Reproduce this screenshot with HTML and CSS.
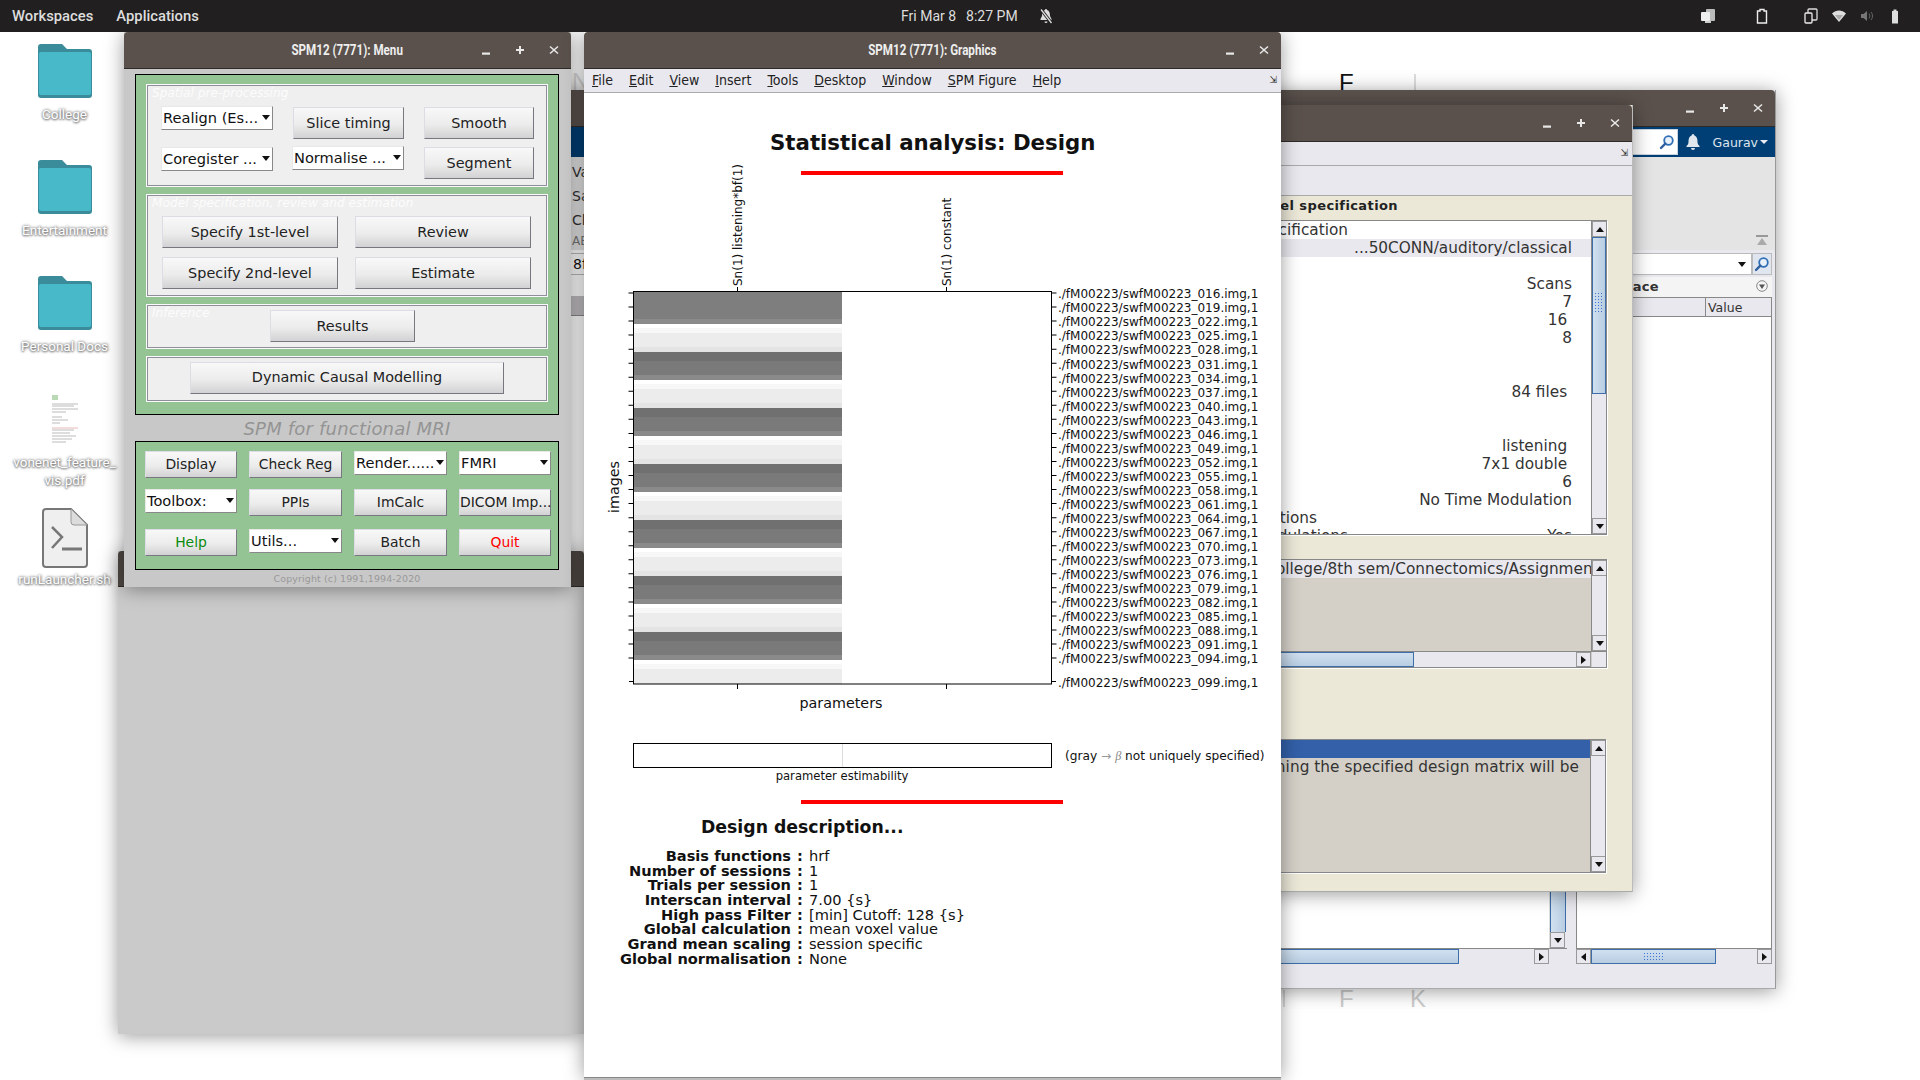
FILE: index.html
```html
<!DOCTYPE html>
<html lang="en">

<head>
    <meta charset="UTF-8">
    <title>SPM12 desktop</title>
    <link rel="stylesheet" href="styles.css">
</head>

<body>
    <svg class="defs" aria-hidden="true">
        <symbol id="i-min" viewBox="0 0 10 10"><rect x="1" y="7.5" width="8" height="2.2" fill="currentColor"/></symbol>
        <symbol id="i-max" viewBox="0 0 10 10"><path d="M4 1h2v3h3v2H6v3H4V6H1V4h3z" fill="currentColor"/></symbol>
        <symbol id="i-close" viewBox="0 0 10 10"><path d="M1.5 1l3.5 3.000L8.500 1 9.500 2 6 5l3.500 3-1 1L5 6 1.500 9l-1-1L4 5 .5 2z" fill="currentColor"/></symbol>
        <symbol id="i-folder" viewBox="0 0 54 54">
            <path d="M3 0h21l5 5h22a3 3 0 0 1 3 3v43a3 3 0 0 1-3 3H3a3 3 0 0 1-3-3V3a3 3 0 0 1 3-3z" fill="#3a8c9a"/>
            <path d="M3 8h48a2 2 0 0 1 2 2v39a2 2 0 0 1-2 2H3a2 2 0 0 1-2-2V10a2 2 0 0 1 2-2z" fill="#48b9c9"/>
        </symbol>
        <symbol id="i-glass" viewBox="0 0 16 16">
            <circle cx="9.500" cy="6.500" r="4.300" fill="#e8f0fa" stroke="#2f6fb5" stroke-width="1.800"/>
            <path d="M6.300 9.700L2 14" stroke="#2f5f9f" stroke-width="2.400" stroke-linecap="round"/>
        </symbol>
    </svg>

    <div class="desktop">
        <!-- page underneath the windows -->
        <span class="bg-mark bg-n">N</span>
        <span class="bg-mark bg-e">F</span>
        <span class="bg-mark bg-bar"></span>
        <span class="bg-mark bg-f">F</span>
        <span class="bg-mark bg-k">K</span>
        <span class="bg-mark bg-bar2"></span>

        <div class="icons">
            <div class="dicon">
                <svg class="folder"><use href="#i-folder"/></svg>
                <div class="dlabel">College</div>
            </div>
            <div class="dicon">
                <svg class="folder"><use href="#i-folder"/></svg>
                <div class="dlabel">Entertainment</div>
            </div>
            <div class="dicon">
                <svg class="folder"><use href="#i-folder"/></svg>
                <div class="dlabel">Personal Docs</div>
            </div>
            <div class="dicon">
                <svg class="pdf" viewBox="0 0 38 54">
                    <rect width="38" height="54" fill="#fff"/>
                    <rect x="6" y="3" width="6" height="5" fill="#b9d8b4"/>
                    <path d="M6 12h26M6 14h22M6 17h26M6 20h14M6 25h10M6 28h16M6 31h8M6 38h22M6 41h18M6 44h24M6 47h20M6 50h14" stroke="#bbb" stroke-width="1"/>
                    <path d="M6 36h26" stroke="#e6b8b8" stroke-width="1"/>
                </svg>
                <div class="dlabel">vonenet_feature_<br>vis.pdf</div>
            </div>
            <div class="dicon">
                <svg class="script" viewBox="0 0 46 60">
                    <path d="M4 1h25l16 16v39a3 3 0 0 1-3 3H4a3 3 0 0 1-3-3V4a3 3 0 0 1 3-3z" fill="#efefef" stroke="#777" stroke-width="2"/>
                    <path d="M29 1v13a3 3 0 0 0 3 3h13z" fill="#dcdcdc" stroke="#999" stroke-width="1"/>
                    <path d="M10 19l10 10-10 11" fill="none" stroke="#777" stroke-width="2.500"/>
                    <path d="M20 41h20" stroke="#777" stroke-width="3"/>
                </svg>
                <div class="dlabel">runLauncher.sh</div>
            </div>
        </div>

        <!-- gray figure behind the menu -->
        <div class="window win-blank">
            <div class="blank-bar"></div>
        </div>

        <!-- matlab main window -->
        <div class="window win-matlab">
            <div class="titlebar">
                <span></span>
                <span></span>
                <div class="controls">
                    <svg><use href="#i-min"/></svg>
                    <svg><use href="#i-max"/></svg>
                    <svg><use href="#i-close"/></svg>
                </div>
            </div>
            <div class="ml-blue">
                <div class="ml-search"><svg class="glass"><use href="#i-glass"/></svg></div>
                <svg class="ml-bell" viewBox="0 0 14 16">
                    <path d="M7 0a1.500 1.500 0 0 1 1.400 1.500C11 2.300 11.500 5 11.500 8c0 2 1 3 2 4v1H.5v-1c1-1 2-2 2-4 0-3 .5-5.700 3.100-6.500A1.500 1.500 0 0 1 7 0zM5 14h4a2 2 0 0 1-4 0z" fill="#dfe6ee"/>
                </svg>
                <span class="ml-user">Gaurav</span>
                <span class="caret-white"></span>
            </div>
            <div class="ml-tools">
                <div class="strip-labels">
                    <div>Va</div>
                    <div>Sa</div>
                    <div>Cl</div>
                    <div class="strip-ab">AB</div>
                </div>
                <svg class="collapse" viewBox="0 0 12 12">
                    <rect y="0" width="12" height="2" fill="#999"/>
                    <path d="M6 3l5 7H1z" fill="#aaa"/>
                </svg>
            </div>
            <div class="ml-panels">
                <div class="left-panel">
                    <div class="left-top">
                        <div class="left-content">
                            <div class="strip-row">8f</div>
                            <div class="strip-gap"></div>
                            <div class="strip-dark"></div>
                        </div>
                        <div class="sb-v sb-v-long">
                            <div class="sb-track"><div class="sb-thumb-v tall"></div></div>
                            <div class="sb-btn down"></div>
                        </div>
                    </div>
                    <div class="sb-h left-sb">
                        <div class="sb-thumb-h fill"></div>
                        <div class="sb-rest"></div>
                        <div class="sb-btn right"></div>
                        <div class="sb-corner"></div>
                    </div>
                </div>
                <div class="right-panel">
                    <div class="combo-row">
                        <div class="combo"><span class="tri"></span></div>
                        <div class="combo-btn"><svg class="glass"><use href="#i-glass"/></svg></div>
                    </div>
                    <div class="ws-head">
                        <span>Workspace</span>
                        <svg class="ws-menu" viewBox="0 0 12 12">
                            <circle cx="6" cy="6" r="5.300" fill="none" stroke="#888"/>
                            <path d="M3 4.500h6L6 9z" fill="#555"/>
                        </svg>
                    </div>
                    <div class="ws-cols">
                        <div class="ws-name">Name</div>
                        <div class="ws-value">Value</div>
                    </div>
                    <div class="ws-body"></div>
                    <div class="sb-h">
                        <div class="sb-btn left"></div>
                        <div class="sb-thumb-h mid"><span class="grip grip-h"></span></div>
                        <div class="sb-rest"></div>
                        <div class="sb-btn right"></div>
                    </div>
                </div>
            </div>
            <div class="ml-status"></div>
        </div>

        <!-- batch editor -->
        <div class="window win-batch">
            <div class="titlebar">
                <span></span>
                <span></span>
                <div class="controls">
                    <svg><use href="#i-min"/></svg>
                    <svg><use href="#i-max"/></svg>
                    <svg><use href="#i-close"/></svg>
                </div>
            </div>
            <div class="menubar batch-menu"><span class="dock-arrow">&#8690;</span></div>
            <div class="batch-tools"></div>
            <div class="batch-body">
                <div class="module-title">Current Module: fMRI model specification</div>

                <div class="list list-module">
                    <div class="list-rows">
                        <div class="row"><span class="row-left">fMRI model specification</span></div>
                        <div class="row row-sel"><span class="row-right">...50CONN/auditory/classical</span></div>
                        <div class="row"></div>
                        <div class="row"><span class="row-right">Scans</span></div>
                        <div class="row"><span class="row-right">7</span></div>
                        <div class="row"><span class="row-right">16 </span></div>
                        <div class="row"><span class="row-right">8</span></div>
                        <div class="row"></div>
                        <div class="row"></div>
                        <div class="row"><span class="row-right">84 files </span></div>
                        <div class="row"></div>
                        <div class="row"></div>
                        <div class="row"><span class="row-right">listening </span></div>
                        <div class="row"><span class="row-right">7x1 double </span></div>
                        <div class="row"><span class="row-right">6</span></div>
                        <div class="row"><span class="row-right">No Time Modulation</span></div>
                        <div class="row"><span class="row-left row-left-short">Multiple conditions</span></div>
                        <div class="row"><span class="row-left">Orthogonalise modulations</span><span class="row-right">Yes</span></div>
                    </div>
                    <div class="sb-v">
                        <div class="sb-btn up"></div>
                        <div class="sb-track">
                            <div class="sb-thumb-v module-thumb"><span class="grip grip-v"></span></div>
                        </div>
                        <div class="sb-btn down"></div>
                    </div>
                </div>

                <div class="list list-path">
                    <div class="list-main">
                        <div class="list-rows gray">
                            <div class="row row-sel row-path">/home/gaurav/College/8th sem/Connectomics/Assignment1</div>
                        </div>
                        <div class="sb-v">
                            <div class="sb-btn up"></div>
                            <div class="sb-track"></div>
                            <div class="sb-btn down"></div>
                        </div>
                    </div>
                    <div class="sb-h">
                        <div class="sb-thumb-h path-thumb"></div>
                        <div class="sb-rest"></div>
                        <div class="sb-btn right"></div>
                        <div class="sb-corner corner-path"></div>
                    </div>
                </div>

                <div class="list list-help">
                    <div class="list-rows gray">
                        <div class="row row-blue"></div>
                        <div class="row row-help">Directory containing the specified design matrix will be</div>
                    </div>
                    <div class="sb-v">
                        <div class="sb-btn up"></div>
                        <div class="sb-track"></div>
                        <div class="sb-btn down"></div>
                    </div>
                </div>
            </div>
        </div>

        <!-- spm menu -->
        <div class="window win-menu">
            <div class="titlebar">
                <span></span>
                <span class="win-name">SPM12 (7771): Menu</span>
                <div class="controls">
                    <svg><use href="#i-min"/></svg>
                    <svg><use href="#i-max"/></svg>
                    <svg><use href="#i-close"/></svg>
                </div>
            </div>
            <div class="menu-body">
                <div class="frame frame-top">
                    <div class="panel">
                        <div class="panel-title">Spatial pre-processing</div>
                        <div class="grid-spatial">
                            <div class="popup"><span>Realign (Es...</span></div>
                            <button class="btn btn-low">Slice timing</button>
                            <button class="btn btn-low">Smooth</button>
                            <div class="popup"><span>Coregister ...</span></div>
                            <div class="popup popup-up"><span>Normalise ...</span></div>
                            <button class="btn">Segment</button>
                        </div>
                    </div>
                    <div class="panel">
                        <div class="panel-title">Model specification, review and estimation</div>
                        <div class="grid-model">
                            <button class="btn">Specify 1st-level</button>
                            <button class="btn">Review</button>
                            <button class="btn">Specify 2nd-level</button>
                            <button class="btn">Estimate</button>
                        </div>
                    </div>
                    <div class="panel panel-infer">
                        <div class="panel-title">Inference</div>
                        <button class="btn btn-results">Results</button>
                    </div>
                    <div class="panel panel-dcm">
                        <button class="btn btn-dcm">Dynamic Causal Modelling</button>
                    </div>
                </div>

                <div class="spm-for">SPM for functional MRI</div>

                <div class="frame frame-tools">
                    <button class="btn tool">Display</button>
                    <button class="btn tool">Check Reg</button>
                    <div class="popup"><span>Render......</span></div>
                    <div class="popup"><span>FMRI</span></div>
                    <div class="popup"><span>Toolbox:</span></div>
                    <button class="btn tool">PPIs</button>
                    <button class="btn tool">ImCalc</button>
                    <button class="btn tool">DICOM Imp...</button>
                    <button class="btn tool help">Help</button>
                    <div class="popup"><span>Utils...</span></div>
                    <button class="btn tool">Batch</button>
                    <button class="btn tool quit">Quit</button>
                </div>

                <div class="copyright">Copyright (c) 1991,1994-2020</div>
            </div>
        </div>

        <!-- spm graphics -->
        <div class="window win-graphics">
            <div class="titlebar">
                <span></span>
                <span class="win-name">SPM12 (7771): Graphics</span>
                <div class="controls">
                    <svg><use href="#i-min"/></svg>
                    <svg><use href="#i-close"/></svg>
                </div>
            </div>
            <div class="menubar">
                <span><u>F</u>ile</span>
                <span><u>E</u>dit</span>
                <span><u>V</u>iew</span>
                <span><u>I</u>nsert</span>
                <span><u>T</u>ools</span>
                <span><u>D</u>esktop</span>
                <span><u>W</u>indow</span>
                <span><u>S</u>PM Figure</span>
                <span><u>H</u>elp</span>
                <span class="dock-arrow">&#8690;</span>
            </div>
            <div class="figure">
                <h1 class="fig-title">Statistical analysis: Design</h1>
                <div class="red-rule"></div>

                <svg class="plot" viewBox="584 175 697 625">
                    <defs>
                        <pattern id="stripes" x="0" y="324" width="10" height="56" patternUnits="userSpaceOnUse">
                            <rect width="10" height="4" y="0" fill="#ffffff"/>
                            <rect width="10" height="5" y="4" fill="#f7f7f7"/>
                            <rect width="10" height="14" y="9" fill="#ececec"/>
                            <rect width="10" height="5" y="23" fill="#e4e4e4"/>
                            <rect width="10" height="9" y="28" fill="#707070"/>
                            <rect width="10" height="14" y="37" fill="#7a7a7a"/>
                            <rect width="10" height="5" y="51" fill="#8a8a8a"/>
                        </pattern>
                    </defs>

                    <rect x="634" y="292" width="208" height="27" fill="#7e7e7e"/>
                    <rect x="634" y="319" width="208" height="5" fill="#8a8a8a"/>
                    <rect x="634" y="324" width="208" height="360" fill="url(#stripes)"/>

                    <g class="axes">
                        <rect x="633.500" y="291.500" width="418" height="392.500"/>
                        <line class="ticks" x1="631" x2="631" y1="292.500" y2="660"/>
                        <line class="ticks" x1="1054" x2="1054" y1="292.500" y2="660"/>
                        <path d="M629 681.500h4M1052 681.500h4M737.500 287v4M946.500 287v4M737.500 684v5M946.500 684v5"/>
                        <rect x="633.500" y="743.500" width="418" height="24"/>
                        <path class="mid-tick" d="M842.500 744v23"/>
                    </g>

                    <text class="lbl-rot" transform="translate(742,286) rotate(-90)">Sn(1) listening*bf(1)</text>
                    <text class="lbl-rot" transform="translate(951,286) rotate(-90)">Sn(1) constant</text>
                    <text class="lbl-axis" transform="translate(619,487) rotate(-90)" text-anchor="middle">images</text>
                    <text class="lbl-axis" x="841" y="708" text-anchor="middle">parameters</text>
                    <text class="lbl-small" x="842" y="780" text-anchor="middle">parameter estimability</text>
                    <text class="lbl-note" x="1065" y="760">(gray <tspan class="lbl-dim">&#8594;</tspan> <tspan class="lbl-beta">&#946;</tspan> not uniquely specified)</text>

                    <g class="scan-labels">
                        <text x="1058" y="298.300">./fM00223/swfM00223_016.img,1</text>
                        <text x="1058" y="312.300">./fM00223/swfM00223_019.img,1</text>
                        <text x="1058" y="326.400">./fM00223/swfM00223_022.img,1</text>
                        <text x="1058" y="340.400">./fM00223/swfM00223_025.img,1</text>
                        <text x="1058" y="354.400">./fM00223/swfM00223_028.img,1</text>
                        <text x="1058" y="368.500">./fM00223/swfM00223_031.img,1</text>
                        <text x="1058" y="382.500">./fM00223/swfM00223_034.img,1</text>
                        <text x="1058" y="396.500">./fM00223/swfM00223_037.img,1</text>
                        <text x="1058" y="410.600">./fM00223/swfM00223_040.img,1</text>
                        <text x="1058" y="424.600">./fM00223/swfM00223_043.img,1</text>
                        <text x="1058" y="438.600">./fM00223/swfM00223_046.img,1</text>
                        <text x="1058" y="452.600">./fM00223/swfM00223_049.img,1</text>
                        <text x="1058" y="466.700">./fM00223/swfM00223_052.img,1</text>
                        <text x="1058" y="480.700">./fM00223/swfM00223_055.img,1</text>
                        <text x="1058" y="494.700">./fM00223/swfM00223_058.img,1</text>
                        <text x="1058" y="508.800">./fM00223/swfM00223_061.img,1</text>
                        <text x="1058" y="522.800">./fM00223/swfM00223_064.img,1</text>
                        <text x="1058" y="536.800">./fM00223/swfM00223_067.img,1</text>
                        <text x="1058" y="550.800">./fM00223/swfM00223_070.img,1</text>
                        <text x="1058" y="564.900">./fM00223/swfM00223_073.img,1</text>
                        <text x="1058" y="578.900">./fM00223/swfM00223_076.img,1</text>
                        <text x="1058" y="592.900">./fM00223/swfM00223_079.img,1</text>
                        <text x="1058" y="607">./fM00223/swfM00223_082.img,1</text>
                        <text x="1058" y="621">./fM00223/swfM00223_085.img,1</text>
                        <text x="1058" y="635">./fM00223/swfM00223_088.img,1</text>
                        <text x="1058" y="649.100">./fM00223/swfM00223_091.img,1</text>
                        <text x="1058" y="663.100">./fM00223/swfM00223_094.img,1</text>
                        <text x="1058" y="686.800">./fM00223/swfM00223_099.img,1</text>
                    </g>
                </svg>

                <div class="red-rule second"></div>
                <h2 class="desc-title">Design description...</h2>
                <div class="desc">
                    <b>Basis functions</b><b>:</b><span>hrf</span>
                    <b>Number of sessions</b><b>:</b><span>1</span>
                    <b>Trials per session</b><b>:</b><span>1</span>
                    <b>Interscan interval</b><b>:</b><span>7.00 {s}</span>
                    <b>High pass Filter</b><b>:</b><span>[min] Cutoff: 128 {s}</span>
                    <b>Global calculation</b><b>:</b><span>mean voxel value</span>
                    <b>Grand mean scaling</b><b>:</b><span>session specific</span>
                    <b>Global normalisation</b><b>:</b><span>None</span>
                </div>
            </div>
        </div>
        <div class="under-bar"></div>

        <header class="topbar">
            <div class="tb-left">
                <span>Workspaces</span>
                <span>Applications</span>
            </div>
            <div class="tb-clock">
                <span>Fri Mar 8</span>
                <span>8:27 PM</span>
                <svg class="tb-mute" viewBox="0 0 16 16">
                    <path d="M8 1c.7 0 1 .5 1 1 2.500.8 3 3 3 6l1.500 3v1h-11v-1L4 8c0-3 .5-5.200 3-6 0-.5.3-1 1-1zM6.500 13.500h3a1.500 1.500 0 0 1-3 0z" fill="#ddd"/>
                    <path d="M3 1.500L13.500 15" stroke="#211f20" stroke-width="3"/>
                    <path d="M3 1.500L13.500 15" stroke="#ddd" stroke-width="1.300"/>
                </svg>
            </div>
            <div class="tb-tray">
                <svg class="tray" viewBox="0 0 16 16">
                    <rect x="6" y="1" width="9" height="12" rx="1" fill="#bbb"/>
                    <rect x="1" y="4" width="9" height="9" rx="1" fill="#eee"/>
                    <rect x="5" y="13" width="6" height="2" fill="#ccc"/>
                </svg>
                <svg class="tray tray-b" viewBox="0 0 16 16">
                    <path d="M6 1.500h4V3h2.500v12h-9V3H6z" fill="none" stroke="#eee" stroke-width="1.400"/>
                </svg>
                <svg class="tray tray-c" viewBox="0 0 16 16">
                    <rect x="5" y="1" width="9" height="11" rx="1" fill="none" stroke="#ddd" stroke-width="1.300"/>
                    <rect x="2" y="5" width="7" height="10" rx="1" fill="#211f20" stroke="#eee" stroke-width="1.300"/>
                </svg>
                <svg class="tray tray-d" viewBox="0 0 16 16">
                    <path d="M1 5.500C5 1.500 11 1.500 15 5.500L8 14z" fill="#ddd"/>
                    <path d="M4 7h8L8 12z" fill="#aaa"/>
                </svg>
                <svg class="tray tray-d" viewBox="0 0 16 16">
                    <path d="M2 6h2.500L8 3v10L4.500 10H2z" fill="#777"/>
                    <path d="M10 5.500a4 4 0 0 1 0 5M12 4a6 6 0 0 1 0 8" fill="none" stroke="#666"/>
                </svg>
                <svg class="tray tray-d" viewBox="0 0 16 16">
                    <path d="M5 3h1.500V1.500h3V3H11v12.500H5z" fill="#ddd"/>
                </svg>
            </div>
        </header>
    </div>
</body>

</html>
```
FILE: styles.css
```css
* {
    box-sizing: border-box;
}

html, body {
    margin: 0;
    padding: 0;
}

body {
    width: 1920px;
    height: 1080px;
    overflow: hidden;
    background-color: #fff;
    font-family: "DejaVu Sans", sans-serif;
    color: #222;
}

.defs {
    display: none;
}

.desktop {
    position: relative;
    width: 1920px;
    height: 1080px;
    overflow: hidden;
    background-color: #fff;
}

/* top bar */
.topbar {
    position: absolute;
    left: 0;
    top: 0;
    z-index: 10;
    width: 1920px;
    height: 32px;
    display: flex;
    align-items: center;
    background-color: #211f20;
    color: #ddd;
    font-family: Roboto, sans-serif;
    font-size: 14.800px;
    font-weight: 500;
}

.tb-left {
    width: 901px;
    padding-left: 12px;
    display: flex;
    gap: 23px;
}

.tb-clock {
    display: flex;
    align-items: center;
    gap: 10px;
    font-size: 14px;
    font-weight: 400;
}

.tb-mute {
    width: 16px;
    height: 16px;
    margin-left: 10px;
}

.tb-tray {
    margin-left: auto;
    padding-right: 17px;
    display: flex;
    align-items: center;
}

.tray {
    width: 16px;
    height: 16px;
}

.tray-b {
    margin-left: 38px;
}

.tray-c {
    margin-left: 33px;
}

.tray-d {
    margin-left: 12px;
}

/* marks of the page under the windows */
.bg-mark {
    position: absolute;
    font-family: "Liberation Sans", sans-serif;
    font-size: 24px;
    line-height: 24px;
}

.bg-n {
    left: 572px;
    top: 70px;
    color: #ddd;
}

.bg-e {
    left: 1339px;
    top: 71px;
    color: #111;
}

.bg-bar {
    left: 1414px;
    top: 74px;
    width: 2px;
    height: 16px;
    background-color: #ddd;
}

.bg-f {
    left: 1339px;
    top: 987px;
    color: #ccc;
}

.bg-k {
    left: 1410px;
    top: 987px;
    color: #ccc;
}

.bg-bar2 {
    left: 1283px;
    top: 990px;
    width: 2px;
    height: 17px;
    background-color: #ddd;
}

/* desktop icons */
.icons {
    position: absolute;
    left: 0;
    top: 44px;
    width: 129px;
    display: flex;
    flex-direction: column;
    align-items: center;
}

.dicon {
    height: 116px;
    display: flex;
    flex-direction: column;
    align-items: center;
}

.folder {
    width: 54px;
    height: 54px;
    margin-bottom: 7px;
}

.pdf {
    width: 38px;
    height: 54px;
    margin-bottom: 7px;
}

.script {
    width: 46px;
    height: 60px;
    margin-bottom: 2px;
}

.dlabel {
    width: 120px;
    text-align: center;
    font-family: Roboto, sans-serif;
    font-size: 13.500px;
    line-height: 18px;
    color: #fff;
    text-shadow: 0 0 3px #777, 0 1px 2px #888, 1px 0 3px #999;
}

/* windows */
.window {
    position: absolute;
    box-shadow: 0 2px 18px rgba(0, 0, 0, 0.4);
    display: flex;
    flex-direction: column;
}

.titlebar {
    height: 37px;
    flex: none;
    display: grid;
    grid-template-columns: 1fr auto 1fr;
    align-items: center;
    background-color: #5a514c;
    border-bottom: 1px solid #2e2a28;
    border-radius: 4px 4px 0 0;
    color: #eee;
}

.win-name {
    font-family: Roboto, sans-serif;
    font-size: 14px;
    font-weight: bold;
    transform: scaleX(0.83);
}

.controls {
    justify-self: end;
    display: flex;
}

.controls svg {
    width: 34px;
    height: 10px;
    color: #e8e8e8;
}

.win-blank {
    left: 118px;
    top: 551px;
    width: 466px;
    height: 483px;
    background-color: #cacaca;
    z-index: 2;
}

.blank-bar {
    height: 36px;
    background-color: #4f4843;
    border-bottom: 1px solid #2e2a28;
    border-radius: 4px 4px 0 0;
}

.win-matlab {
    left: 540px;
    top: 90px;
    width: 1236px;
    height: 899px;
    z-index: 1;
    background-color: #e9e8ee;
    border-right: 1px solid #999;
    border-bottom: 1px solid #aaa;
}

.win-batch {
    left: 1100px;
    top: 105px;
    width: 533px;
    height: 787px;
    z-index: 2;
    background-color: #ebe8d8;
    border-right: 1px solid #bbb;
    border-bottom: 1px solid #aaa;
}

.win-menu {
    left: 124px;
    top: 32px;
    width: 447px;
    height: 555px;
    z-index: 3;
    background-color: #c8c8c8;
}

.win-graphics {
    left: 584px;
    top: 32px;
    width: 697px;
    height: 1045px;
    z-index: 4;
    background-color: #fff;
}

.under-bar {
    position: absolute;
    left: 584px;
    top: 1077px;
    width: 697px;
    height: 3px;
    z-index: 4;
    background-color: #bbb;
    border-top: 1px solid #888;
}

/* spm menu */
.menu-body {
    flex: 1;
    padding: 5px 12px 0 11px;
}

.frame {
    border: 1px solid #000;
    background-color: #94c494;
}

.frame-top {
    height: 341px;
    padding: 9px 10px;
    display: flex;
    flex-direction: column;
    gap: 7px;
}

.panel {
    height: 103px;
    flex: none;
    border: 1px solid #fafafa;
    box-shadow: inset 0 0 0 1px #8f8f9c;
    background-color: #efefef;
}

.panel-title {
    padding: 0 0 0 4px;
    margin-left: 1px;
    height: 16px;
    font-style: italic;
    font-size: 12.200px;
    line-height: 17px;
    color: #fcfcfc;
}

.grid-spatial {
    display: grid;
    grid-template-columns: 112px 111px 110px;
    grid-auto-rows: 41px;
    column-gap: 20px;
    margin: 5px 0 0 14px;
}

.grid-spatial .btn-low {
    margin-top: 1px;
}

.grid-model {
    display: grid;
    grid-template-columns: 176px 176px;
    grid-auto-rows: 41px;
    column-gap: 17px;
    margin: 5px 0 0 15px;
}

.panel-infer {
    height: 45px;
    display: grid;
    grid-template-columns: 123px 145px;
    padding-top: 5px;
}

.panel-infer .panel-title {
    margin-top: -5px;
}

.panel-dcm {
    height: 46px;
    display: flex;
    justify-content: center;
    padding-top: 5px;
}

.btn {
    height: 32px;
    padding: 0;
    border: 1px solid;
    border-color: #dcdce4 #77777f #77777f #dcdce4;
    background: linear-gradient(#f8f8f8, #ececec 55%, #d2d2d4);
    font-family: "DejaVu Sans", sans-serif;
    font-size: 14.400px;
    color: #222;
    white-space: nowrap;
}

.btn-results {
    width: 145px;
}

.btn-dcm {
    width: 314px;
    padding-bottom: 2px;
}

.popup {
    height: 24px;
    display: flex;
    align-items: center;
    justify-content: space-between;
    padding: 0 2px 1px 1px;
    background-color: #fff;
    border: 1px solid;
    border-color: #e8e8e8 #888 #888 #e8e8e8;
    font-size: 14.600px;
    color: #111;
    white-space: nowrap;
}

.popup::after, .tri {
    content: "";
    display: block;
    border-left: 4px solid transparent;
    border-right: 4px solid transparent;
    border-top: 5px solid #111;
}

.popup-up {
    margin: -1px 0 0 -1px;
    width: 112px;
}

.spm-for {
    height: 26px;
    text-align: center;
    font-style: italic;
    font-size: 18px;
    line-height: 28px;
    color: #949494;
    letter-spacing: 0.200px;
}

.frame-tools {
    height: 129px;
    padding: 9px 0 0 9px;
    display: grid;
    grid-template-columns: 92px 93px 93px 92px;
    grid-template-rows: 38px 40px 27px;
    column-gap: 12px;
}

.tool {
    height: 27px;
    padding-bottom: 2px;
    font-size: 13.900px;
}

.help {
    color: #0a8a0a;
}

.quit {
    color: #f00;
}

.copyright {
    text-align: center;
    font-size: 9.500px;
    line-height: 17px;
    color: #999;
    letter-spacing: 0.100px;
}

/* graphics menu */
.menubar {
    height: 24px;
    flex: none;
    display: flex;
    align-items: center;
    gap: 16px;
    padding: 0 0 2px 8px;
    background-color: #e9e8ee;
    border-bottom: 1px solid #aaa;
    font-family: "DejaVu Sans Condensed", "DejaVu Sans", sans-serif;
    font-size: 14px;
    color: #222;
}

.dock-arrow {
    margin-left: auto;
    padding-right: 4px;
    font-size: 10px;
}

.figure {
    flex: 1;
    color: #111;
}

.fig-title {
    margin: 37px 0 0 186px;
    font-size: 21.300px;
    line-height: 26px;
    font-weight: bold;
    color: #111;
}

.red-rule {
    width: 262px;
    height: 4px;
    margin: 15px 0 0 217px;
    background-color: #f00;
}

.red-rule.second {
    margin-top: 0;
}

.plot {
    display: block;
    width: 697px;
    height: 625px;
    overflow: visible;
}

.axes {
    fill: none;
    stroke: #000;
    stroke-width: 1;
}

.ticks {
    stroke-width: 5;
    stroke-dasharray: 1 13.040;
}

.mid-tick {
    stroke: #ddd;
}

.lbl-rot {
    font-size: 12px;
    fill: #111;
}

.lbl-axis {
    font-size: 14.300px;
    fill: #111;
}

.lbl-small {
    font-size: 11.600px;
    fill: #111;
}

.lbl-note {
    font-size: 12.200px;
    fill: #111;
}

.lbl-dim {
    fill: #999;
}

.lbl-beta {
    font-family: "Liberation Serif", serif;
    font-style: italic;
    fill: #888;
}

.scan-labels {
    font-size: 12px;
    fill: #111;
}

.desc-title {
    margin: 12px 0 0 117px;
    font-size: 17.300px;
    line-height: 23px;
    font-weight: bold;
    color: #111;
}

.desc {
    margin-top: 10px;
    display: grid;
    grid-template-columns: 207px 18px auto;
    grid-auto-rows: 14.700px;
    font-size: 14.600px;
    line-height: 14.700px;
    color: #111;
}

.desc b:nth-child(3n+1) {
    text-align: right;
    white-space: nowrap;
}

.desc b:nth-child(3n+2) {
    text-align: center;
}

/* batch editor */
.batch-menu {
    padding-left: 0;
}

.batch-tools {
    height: 30px;
    flex: none;
    background-color: #e9e8ee;
    border-bottom: 1px solid #aaa;
}

.batch-body {
    flex: 1;
    padding-right: 25px;
}

.module-title {
    height: 24px;
    display: flex;
    justify-content: flex-end;
    padding-right: 209px;
    white-space: nowrap;
    overflow: hidden;
    font-size: 13px;
    font-weight: bold;
    letter-spacing: 0.400px;
    line-height: 19px;
    color: #222;
}

.list {
    display: flex;
    border: 1px solid #888;
    box-shadow: 1px 1px 0 #fff;
    background-color: #fff;
    overflow: hidden;
}

.list-module {
    height: 315px;
}

.list-path {
    flex-direction: column;
    height: 109px;
    margin-top: 24px;
}

.list-help {
    height: 134px;
    margin: 71px 1px 0 0;
}

.list-main {
    flex: 1;
    display: flex;
    min-height: 0;
}

.list-rows {
    flex: 1;
    min-width: 0;
    overflow: hidden;
    font-size: 15.300px;
    line-height: 18px;
    color: #333;
}

.list-rows.gray {
    background-color: #d4d0c8;
}

.row {
    height: 18px;
    display: flex;
    justify-content: space-between;
    white-space: pre;
}

.row-sel {
    background-color: #e9e8ee;
}

.row-blue {
    background-color: #3360a8;
}

.row-left {
    width: 247px;
    text-align: right;
    overflow: visible;
}

.row-left-short {
    width: 216px;
}

.row-right {
    margin-left: auto;
    padding-right: 19px;
}

.row-path {
    padding-left: 52px;
}

.row-help {
    justify-content: flex-end;
    padding-right: 11px;
    letter-spacing: 0.050px;
}

/* scrollbars */
.sb-v {
    width: 15px;
    flex: none;
    display: flex;
    flex-direction: column;
    background-color: #e9e8ee;
    border-left: 1px solid #888;
}

.sb-track {
    flex: 1;
    background-color: #e9e8ee;
}

.sb-btn {
    width: 15px;
    height: 16px;
    flex: none;
    display: flex;
    align-items: center;
    justify-content: center;
    background-color: #e9e8ee;
    border: 1px solid #999;
}

.sb-btn::before {
    content: "";
    border: 4px solid transparent;
}

.sb-btn.up::before {
    border-bottom: 5px solid #111;
    border-top: 0;
}

.sb-btn.down::before {
    border-top: 5px solid #111;
    border-bottom: 0;
}

.sb-btn.left::before {
    border-right: 5px solid #111;
    border-left: 0;
}

.sb-btn.right::before {
    border-left: 5px solid #111;
    border-right: 0;
}

.sb-thumb-v {
    display: flex;
    align-items: center;
    justify-content: center;
    background: linear-gradient(90deg, #d0e0f0, #b8cde2);
    border: 1px solid #3d6ea8;
}

.module-thumb {
    height: 157px;
    padding-bottom: 26px;
}

.tall {
    height: 100%;
}

.sb-h {
    height: 16px;
    flex: none;
    display: flex;
    background-color: #e9e8ee;
    border-top: 1px solid #888;
}

.sb-h .sb-btn {
    height: 15px;
}

.sb-rest {
    flex: 1;
    background-color: #e9e8ee;
}

.sb-thumb-h {
    flex: none;
    display: flex;
    align-items: center;
    justify-content: center;
    background: linear-gradient(#d0e0f0, #b8cde2);
    border-right: 1px solid #3d6ea8;
    border-top: 1px solid #3d6ea8;
    border-bottom: 1px solid #3d6ea8;
}

.path-thumb {
    width: 313px;
}

.fill {
    width: 919px;
}

.mid {
    width: 125px;
    border-left: 1px solid #3d6ea8;
}

.sb-corner {
    width: 18px;
    flex: none;
    background-color: #e9e8ee;
}

.corner-path {
    width: 15px;
    border-left: 1px solid #ccc;
}

.grip {
    display: block;
    background-image: radial-gradient(#3f75d0 0.700px, transparent 0.900px);
    background-size: 3px 3px;
}

.grip-v {
    width: 10px;
    height: 22px;
}

.grip-h {
    width: 22px;
    height: 10px;
}

/* matlab window */
.ml-blue {
    height: 30px;
    flex: none;
    display: flex;
    align-items: center;
    justify-content: flex-end;
    padding-right: 7px;
    background-color: #003f75;
    color: #dfe6ee;
    font-family: "DejaVu Sans", sans-serif;
    font-size: 12.500px;
}

.ml-search {
    width: 200px;
    height: 26px;
    display: flex;
    align-items: center;
    justify-content: flex-end;
    padding-right: 2px;
    background-color: #fff;
    border: 1px solid #c8d4e0;
}

.glass {
    width: 16px;
    height: 16px;
}

.ml-bell {
    width: 14px;
    height: 16px;
    margin: 0 13px 0 8px;
}

.ml-user {
    margin-right: 2px;
}

.caret-white {
    border-left: 4px solid transparent;
    border-right: 4px solid transparent;
    border-top: 4px solid #e8eef4;
}

.ml-tools {
    height: 93px;
    flex: none;
    display: flex;
    justify-content: space-between;
    padding: 3px 7px 0 32px;
    background-color: #e4e4e4;
}

.strip-labels {
    height: 88px;
    font-size: 14px;
    line-height: 24px;
    color: #333;
}

.strip-ab {
    font-size: 12px;
    line-height: 18px;
    color: #777;
}

.collapse {
    width: 12px;
    height: 12px;
    margin-top: 75px;
}

.ml-panels {
    flex: 1;
    min-height: 0;
    display: flex;
    gap: 9px;
    background-color: #e9e8ee;
}

.left-panel {
    width: 1027px;
    flex: none;
    display: flex;
    flex-direction: column;
}

.left-top {
    flex: 1;
    min-height: 0;
    display: flex;
}

.left-content {
    flex: 1;
    background-color: #fff;
    padding-left: 32px;
    border-right: 1px solid #ddd;
}

.strip-row {
    height: 22px;
    margin-left: -32px;
    padding-left: 33px;
    margin-top: 3px;
    font-size: 14px;
    line-height: 20px;
    color: #111;
    border-top: 1px solid #bbb;
    border-bottom: 1px solid #bbb;
}

.strip-gap {
    height: 21px;
}

.strip-dark {
    height: 20px;
    margin-left: -32px;
    background-color: #c0bec2;
    border-bottom: 1px solid #888;
}

.sb-v-long {
    width: 16px;
    margin-right: 1px;
    border: 0;
}

.sb-v-long .sb-thumb-v {
    border-width: 0 1px 0 1px;
}

.left-sb .sb-btn {
    width: 15px;
}

.right-panel {
    width: 196px;
    flex: none;
    display: flex;
    flex-direction: column;
    padding-top: 3px;
}

.combo-row {
    height: 22px;
    flex: none;
    display: flex;
}

.combo {
    flex: 1;
    display: flex;
    align-items: center;
    justify-content: flex-end;
    padding-right: 5px;
    background-color: #fff;
    border: 1px solid #bbb;
}

.combo-btn {
    width: 20px;
    display: flex;
    align-items: center;
    justify-content: center;
    background-color: #e0e6f0;
    border: 1px solid #bbb;
}

.ws-head {
    height: 20px;
    flex: none;
    margin-top: 2px;
    display: flex;
    align-items: center;
    justify-content: space-between;
    padding: 0 4px 2px 0;
    background-color: #f4f4f4;
    font-size: 13px;
    font-weight: bold;
    letter-spacing: 0.300px;
    color: #333;
}

.ws-menu {
    width: 12px;
    height: 12px;
}

.ws-cols {
    height: 20px;
    flex: none;
    display: flex;
    background-color: #e9e8ee;
    border: 1px solid #888;
    font-size: 12.500px;
    line-height: 19px;
    color: #333;
}

.ws-name {
    width: 129px;
    border-right: 1px solid #888;
    padding-left: 4px;
}

.ws-value {
    padding-left: 2px;
}

.ws-body {
    flex: 1;
    background-color: #fff;
    border-left: 1px solid #888;
    border-right: 1px solid #888;
}

.ml-status {
    height: 24px;
    flex: none;
    background-color: #e9e8ee;
}
```
